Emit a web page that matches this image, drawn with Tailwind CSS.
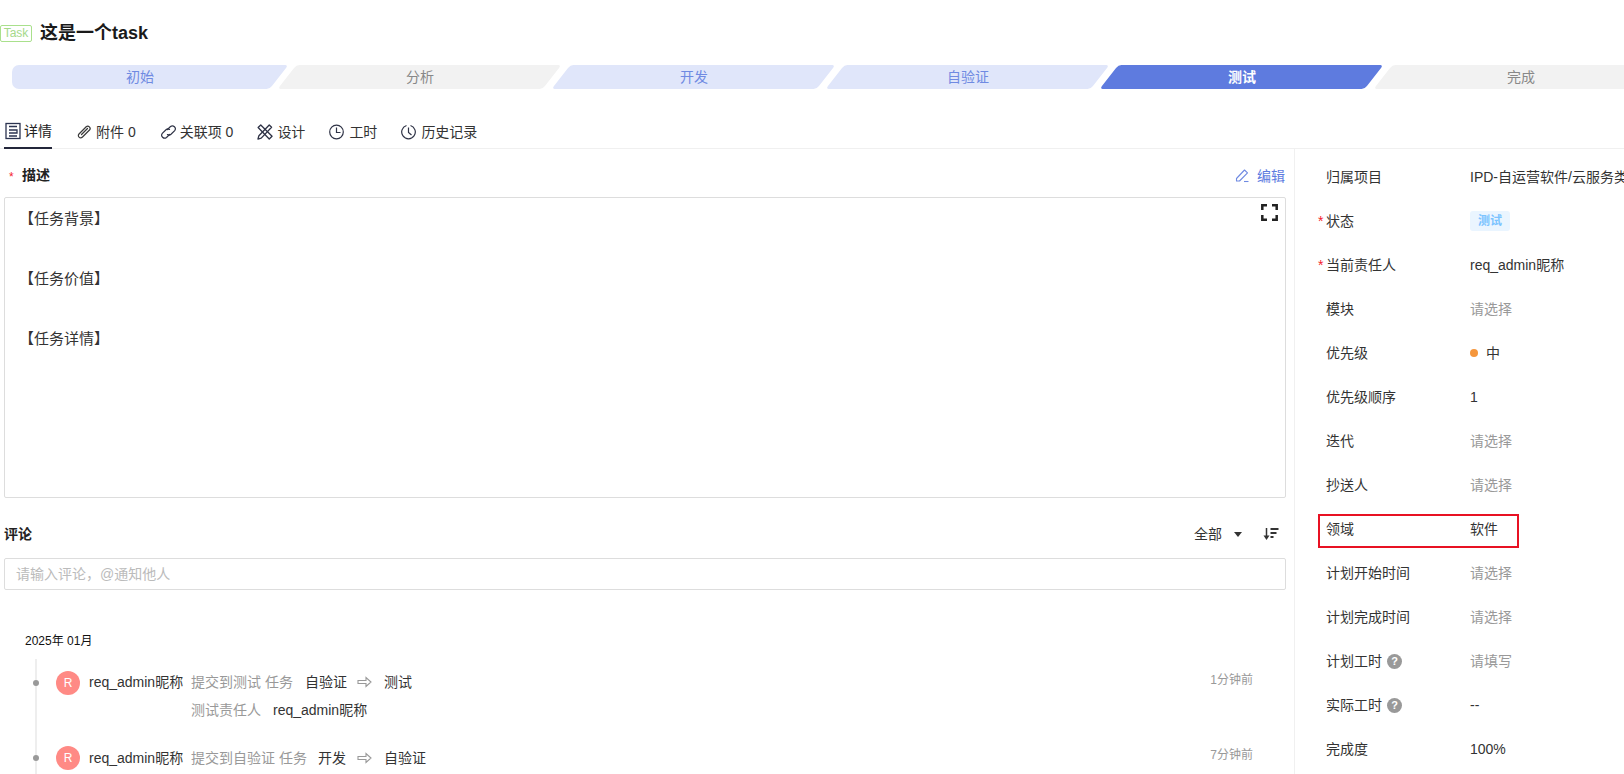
<!DOCTYPE html>
<html lang="zh-CN">
<head>
<meta charset="UTF-8">
<title>Task</title>
<script src="https://cdn.jsdelivr.net/npm/@tailwindcss/browser@4"></script>
</head>
<body class="bg-white text-[14px] leading-5 text-[#333] font-['Liberation_Sans','Noto_Sans_CJK_SC',sans-serif]">
<div class="w-[1624px] h-[774px] overflow-hidden flex flex-col">

  <!-- title -->
  <div class="h-[65px] flex items-center pt-[1px] shrink-0">
    <span class="w-[32px] h-[17px] flex items-center justify-center border border-[#a9e08c] rounded-[2px] text-[12px] text-[#a5d98a]">Task</span>
    <h1 class="ml-[8px] text-[18px] font-bold text-[#1a1a1a]">这是一个task</h1>
  </div>

  <!-- stepper -->
  <div class="h-[24px] flex pl-[12px] gap-[9px] shrink-0">
    <div class="w-[277px] -mr-[11px] h-full overflow-hidden rounded-l-[7px] shrink-0">
      <div class="-ml-[18px] w-[285px] h-full bg-[#e0e6fa] rounded-[3px] -skew-x-[38deg] flex items-center justify-center pl-[7px] text-[#6f8ae2]"><span class="skew-x-[38deg]">初始</span></div>
    </div>
    <div class="w-[265px] h-full bg-[#f2f2f2] rounded-[3px] -skew-x-[38deg] flex items-center justify-center text-[#888] shrink-0"><span class="skew-x-[38deg]">分析</span></div>
    <div class="w-[265px] h-full bg-[#e0e6fa] rounded-[3px] -skew-x-[38deg] flex items-center justify-center text-[#6f8ae2] shrink-0"><span class="skew-x-[38deg]">开发</span></div>
    <div class="w-[265px] h-full bg-[#e0e6fa] rounded-[3px] -skew-x-[38deg] flex items-center justify-center text-[#6f8ae2] shrink-0"><span class="skew-x-[38deg]">自验证</span></div>
    <div class="w-[265px] h-full bg-[#5e7bdf] rounded-[3px] -skew-x-[38deg] flex items-center justify-center text-white font-bold shrink-0"><span class="skew-x-[38deg]">测试</span></div>
    <div class="w-[275px] h-full bg-[#f2f2f2] rounded-[3px] -skew-x-[38deg] flex items-center justify-center text-[#888] shrink-0"><span class="skew-x-[38deg]">完成</span></div>
  </div>

  <!-- tabs -->
  <div class="mt-[30px] h-[30px] flex pl-[4px] border-b border-[#f0f0f0] shrink-0">
    <div class="w-[48px] h-[30px] flex items-center gap-[3px] pb-[4px] border-b-2 border-[#23263a] text-[#222]">
      <svg class="w-[16px] h-[18px] ml-[1px]" viewBox="0 0 16 18" fill="none" stroke="#2b3350" stroke-width="1.300"><rect x="1" y="1.500" width="14" height="15"/><path d="M4 4.500h8M4 8h8v3H4M4 14h8"/></svg>
      <span>详情</span>
    </div>
    <div class="ml-[24px] h-[30px] flex items-center gap-[3px] pb-[4px]">
      <svg class="w-[17px] h-[18px]" viewBox="0 0 17 18" fill="none" stroke="#3a3a3a" stroke-width="1.200" stroke-linecap="round"><path d="M6.500 14l7-7c2-2.200-1.200-5.200-3.300-3.200L3 11c-2 2.200 1 5 3.500 3"/><path d="M5.500 11.500l6-6"/></svg>
      <span>附件 0</span>
    </div>
    <div class="ml-[24px] h-[30px] flex items-center gap-[3px] pb-[4px]">
      <svg class="w-[17px] h-[18px]" viewBox="0 0 17 18" fill="none" stroke="#2f3346" stroke-width="1.200" stroke-linecap="round"><path d="M7.500 6.500l3-3a3 3 0 0 1 4.200 4.200L11 11.300a3 3 0 0 1-3.500.3"/><path d="M9.500 11.500l-3 3a3 3 0 0 1-4.200-4.200L6 6.700a3 3 0 0 1 3.500-.3"/></svg>
      <span>关联项 0</span>
    </div>
    <div class="ml-[24px] h-[30px] flex items-center gap-[4px] pb-[4px]">
      <svg class="w-[16px] h-[18px]" viewBox="0 0 17 18" fill="none" stroke="#2f3346" stroke-width="1.400" stroke-linejoin="round"><path d="M13 1.500l2.500 2.500L4.500 15.500l-3.500 1 1-3.500z"/><path d="M4 1.500L1.200 4.300 13 16.500l3-3z"/></svg>
      <span>设计</span>
    </div>
    <div class="ml-[24px] h-[30px] flex items-center gap-[5px] pb-[4px]">
      <svg class="w-[15px] h-[18px]" viewBox="0 0 15 18" fill="none" stroke="#2f3346" stroke-width="1.200"><circle cx="7.500" cy="9" r="6.800"/><path d="M7.500 4.500V9.500H11.500"/></svg>
      <span>工时</span>
    </div>
    <div class="ml-[24px] h-[30px] flex items-center gap-[5px] pb-[4px]">
      <svg class="w-[15px] h-[18px]" viewBox="0 0 15 18" fill="none" stroke="#2f3346" stroke-width="1.200"><path d="M9.500 2.500a6.800 6.800 0 1 1-4 0"/><path d="M7.500 4.500V9.500L10.500 12"/></svg>
      <span>历史记录</span>
    </div>
  </div>

  <div class="flex flex-1 min-h-0">
    <!-- left column -->
    <div class="w-[1295px] shrink-0 border-r border-[#f0f0f0] pl-[4px] pr-[8px]">
      <div class="h-[48px] flex items-center justify-between pt-[3px]">
        <div class="flex items-center">
          <span class="ml-[5px] mt-[4px] w-[13px] text-[12px] text-[#f5222d]">*</span>
          <span class="font-bold text-[#222]">描述</span>
        </div>
        <div class="flex items-center gap-[7px] text-[#5e7bdf] pt-[2px] pr-[1px]">
          <svg class="w-[15px] h-[15px]" viewBox="0 0 15 15" fill="none" stroke="#6f8ae2" stroke-width="1.100" stroke-linejoin="round"><path d="M1.500 10.500L9.500 2l3 2.800L4.500 13H1.500z"/><path d="M9 13.500h4.500"/></svg>
          <span>编辑</span>
        </div>
      </div>

      <div class="relative h-[301px] border border-[#ddd] rounded-[2px] pl-[14px] pt-[11px] text-[15px]">
        <svg class="absolute right-[7px] top-[6px] w-[17px] h-[17px]" viewBox="0 0 17 17" fill="none" stroke="#222" stroke-width="2.500"><path d="M1.300 6V1.300H6M11 1.300h4.700V6M15.700 11v4.700H11M6 15.700H1.300V11"/></svg>
        <p class="h-[60px]">【任务背景】</p>
        <p class="h-[60px]">【任务价值】</p>
        <p>【任务详情】</p>
      </div>

      <div class="mt-[25px] h-[22px] flex items-center justify-between">
        <span class="font-bold text-[#222]">评论</span>
        <div class="flex items-center">
          <span class="text-[#333]">全部</span>
          <span class="ml-[12px] w-0 h-0 border-x-[4.500px] border-x-transparent border-t-[5px] border-t-[#333]"></span>
          <svg class="ml-[21px] mr-[7px] w-[16px] h-[14px]" viewBox="0 0 16 14" fill="none" stroke="#333"><path stroke-width="1.500" d="M3.500 1v10"/><path fill="#333" stroke="none" d="M0.500 8.500h6L3.500 13z"/><path stroke-width="2" d="M7.500 2h8M7.500 6h6M7.500 10h3"/></svg>
        </div>
      </div>

      <div class="mt-[13px] h-[32px] border border-[#ddd] rounded-[2px] pl-[11px] flex items-center text-[#bbb]">请输入评论，@通知他人</div>

      <p class="mt-[42px] ml-[21px] text-[12px] leading-[18px] text-[#111]">2025年 01月</p>

      <!-- activity -->
      <div class="relative mt-[9px] ml-[31px] pt-[17px] pl-[19px] border-l-2 border-[#eee]">
        <div class="relative flex items-start h-[75px]">
          <span class="absolute -left-[23px] top-[4px] w-[6px] h-[6px] rounded-full bg-[#999]"></span>
          <span class="w-[24px] h-[24px] rounded-full bg-[#ff8a85] text-white text-[12px] flex items-center justify-center -mt-[5px] shrink-0">R</span>
          <div class="ml-[9px] -mt-[4px] w-[102px] shrink-0">req_admin昵称</div>
          <div class="-mt-[4px] flex-1 min-w-0">
            <div class="flex items-center">
              <span class="text-[#999] w-[114px]">提交到测试 任务</span>
              <span class="w-[52px]">自验证</span>
              <svg class="w-[15px] h-[12px]" viewBox="0 0 15 12" fill="none" stroke="#999" stroke-width="1.100"><path d="M1 4.500h8V1.500L14 6 9 10.500V7.500H1z"/></svg>
              <span class="ml-[12px]">测试</span>
            </div>
            <div class="mt-[8px] flex">
              <span class="text-[#999] w-[82px]">测试责任人</span>
              <span>req_admin昵称</span>
            </div>
          </div>
          <span class="absolute right-[33px] -top-[6px] text-[12px] text-[#999]">1分钟前</span>
        </div>
        <div class="relative flex items-start h-[40px]">
          <span class="absolute -left-[23px] top-[4px] w-[6px] h-[6px] rounded-full bg-[#999]"></span>
          <span class="w-[24px] h-[24px] rounded-full bg-[#ff8a85] text-white text-[12px] flex items-center justify-center -mt-[5px] shrink-0">R</span>
          <div class="ml-[9px] -mt-[3px] w-[102px] shrink-0">req_admin昵称</div>
          <div class="-mt-[3px] flex items-center">
            <span class="text-[#999] w-[127px]">提交到自验证 任务</span>
            <span class="w-[39px]">开发</span>
            <svg class="w-[15px] h-[12px]" viewBox="0 0 15 12" fill="none" stroke="#999" stroke-width="1.100"><path d="M1 4.500h8V1.500L14 6 9 10.500V7.500H1z"/></svg>
            <span class="ml-[12px]">自验证</span>
          </div>
          <span class="absolute right-[33px] -top-[6px] text-[12px] text-[#999]">7分钟前</span>
        </div>
      </div>
    </div>

    <!-- right column -->
    <div class="flex-1 min-w-0 pt-[6px] whitespace-nowrap overflow-hidden">
      <div class="h-[44px] flex items-center pl-[31px]"><span class="w-[144px] shrink-0">归属项目</span><span>IPD-自运营软件/云服务类</span></div>
      <div class="h-[44px] flex items-center pl-[23px]"><span class="w-[8px] text-[#f5222d]">*</span><span class="w-[144px]">状态</span><span class="w-[40px] h-[20px] rounded-[3px] bg-[#eaf5ff] text-[#7cc4ff] text-[12px] font-bold flex items-center justify-center">测试</span></div>
      <div class="h-[44px] flex items-center pl-[23px]"><span class="w-[8px] text-[#f5222d]">*</span><span class="w-[144px]">当前责任人</span><span>req_admin昵称</span></div>
      <div class="h-[44px] flex items-center pl-[31px]"><span class="w-[144px]">模块</span><span class="text-[#999]">请选择</span></div>
      <div class="h-[44px] flex items-center pl-[31px]"><span class="w-[144px]">优先级</span><span class="w-[8px] h-[8px] rounded-full bg-[#f5963c]"></span><span class="ml-[8px]">中</span></div>
      <div class="h-[44px] flex items-center pl-[31px]"><span class="w-[144px]">优先级顺序</span><span>1</span></div>
      <div class="h-[44px] flex items-center pl-[31px]"><span class="w-[144px]">迭代</span><span class="text-[#999]">请选择</span></div>
      <div class="h-[44px] flex items-center pl-[31px]"><span class="w-[144px]">抄送人</span><span class="text-[#999]">请选择</span></div>
      <div class="relative h-[44px] flex items-center pl-[31px]">
        <span class="w-[144px]">领域</span><span>软件</span>
        <span class="absolute left-[23px] top-[7px] w-[201px] h-[34px] border-2 border-[#e81123]"></span>
      </div>
      <div class="h-[44px] flex items-center pl-[31px]"><span class="w-[144px]">计划开始时间</span><span class="text-[#999]">请选择</span></div>
      <div class="h-[44px] flex items-center pl-[31px]"><span class="w-[144px]">计划完成时间</span><span class="text-[#999]">请选择</span></div>
      <div class="h-[44px] flex items-center pl-[31px]"><span class="w-[61px]">计划工时</span><span class="w-[15px] h-[15px] rounded-full bg-[#999] text-white text-[11px] font-bold flex items-center justify-center">?</span><span class="ml-[68px] text-[#999]">请填写</span></div>
      <div class="h-[44px] flex items-center pl-[31px]"><span class="w-[61px]">实际工时</span><span class="w-[15px] h-[15px] rounded-full bg-[#999] text-white text-[11px] font-bold flex items-center justify-center">?</span><span class="ml-[68px]">--</span></div>
      <div class="h-[44px] flex items-center pl-[31px]"><span class="w-[144px]">完成度</span><span>100%</span></div>
    </div>
  </div>
</div>
</body>
</html>
